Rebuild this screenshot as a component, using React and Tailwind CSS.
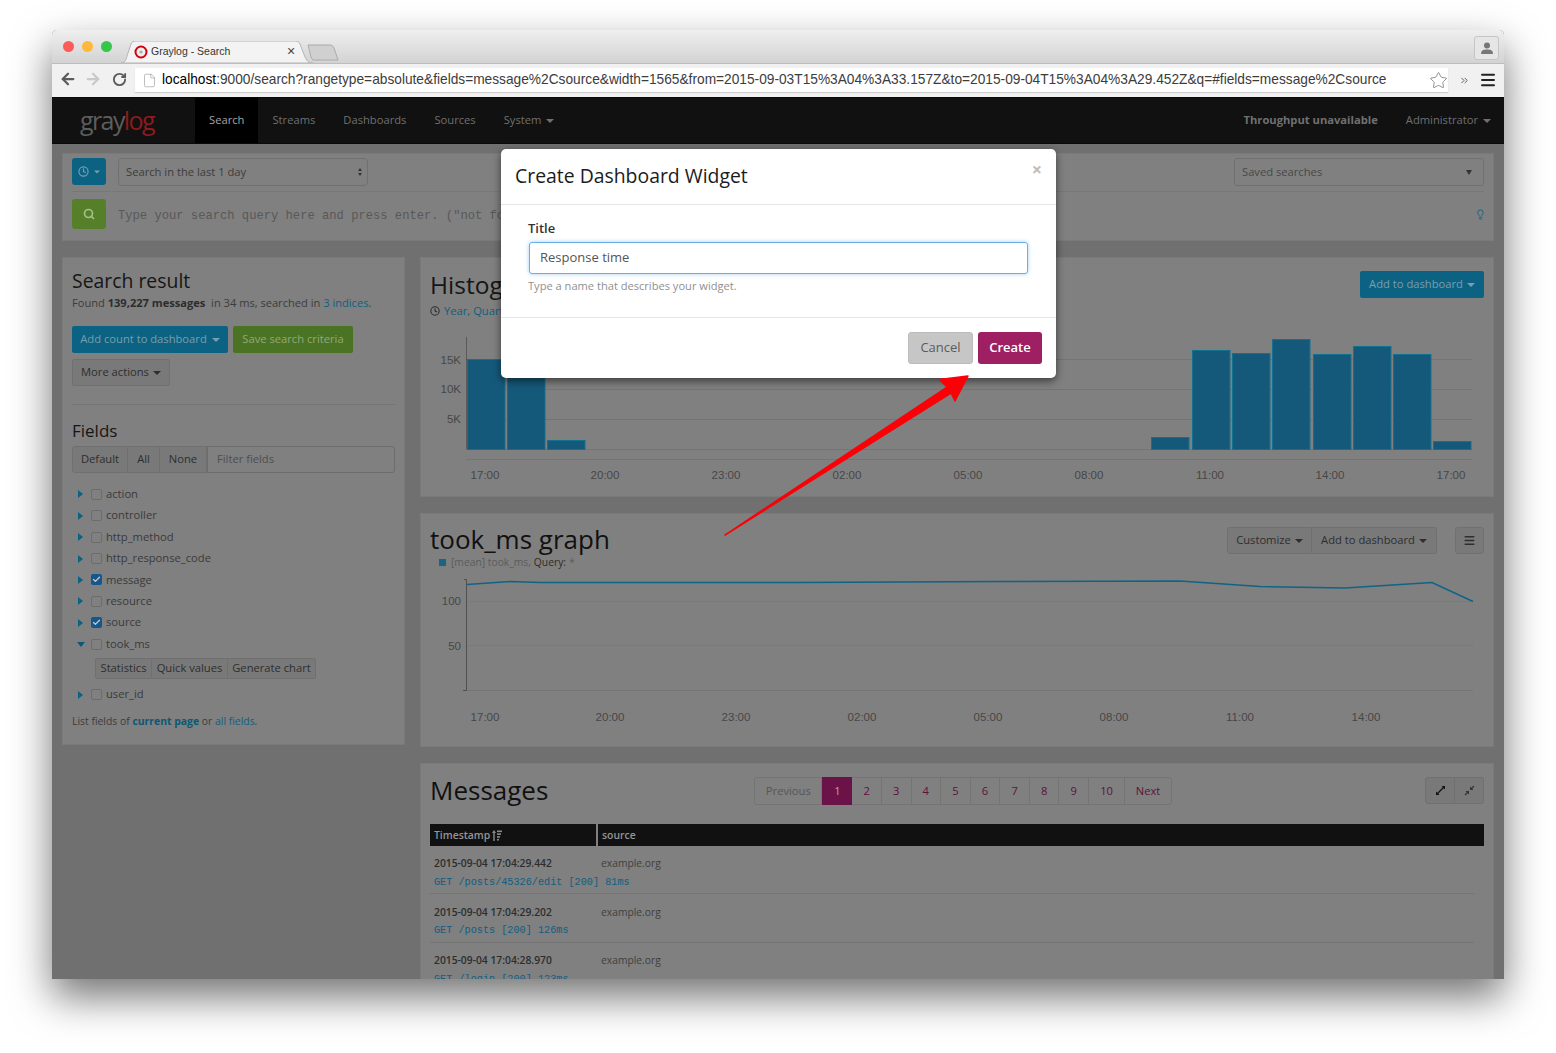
import React from 'react';
import { ArrowLeft, ArrowRight, RotateCw, File, Star, Clock, Search, Lightbulb, Check, Menu, ChevronsRight } from 'lucide-react';

const URL_TEXT = 'localhost:9000/search?rangetype=absolute&fields=message%2Csource&width=1565&from=2015-09-03T15%3A04%3A33.157Z&to=2015-09-04T15%3A04%3A29.452Z&q=#fields=message%2Csource';

const FIELDS = [
  { name: 'action' },
  { name: 'controller' },
  { name: 'http_method' },
  { name: 'http_response_code' },
  { name: 'message', checked: true },
  { name: 'resource' },
  { name: 'source', checked: true },
  { name: 'took_ms', open: true },
  { name: 'user_id' },
];

// page coordinates: x, top of bar (baseline is 449)
const BARS = [
  [467, 359], [507, 360], [547, 440], [1151, 437], [1192, 350], [1232, 353],
  [1272, 339], [1313, 354], [1353, 346], [1393, 354], [1433, 441],
];

const MESSAGES = [
  { time: '2015-09-04 17:04:29.442', text: 'GET /posts/45326/edit [200] 81ms' },
  { time: '2015-09-04 17:04:29.202', text: 'GET /posts [200] 126ms' },
  { time: '2015-09-04 17:04:28.970', text: 'GET /login [200] 123ms' },
];

const PAGES = ['2', '3', '4', '5', '6', '7', '8', '9', '10'];

function Caret({ className = '' }) {
  return <span className={`inline-block h-0 w-0 border-x-[4px] border-t-[4px] border-x-transparent border-t-current ${className}`} />;
}

function Btn({ children, className = '' }) {
  return (
    <div className={`flex items-center justify-center border border-[#707070] bg-[#797979] text-[11.2px] text-[#2e2e2e] ${className}`}>
      {children}
    </div>
  );
}

function BrowserChrome() {
  return (
    <div className="h-[67px] shrink-0 font-['Liberation_Sans',sans-serif]">
      {/* tab strip */}
      <div className="flex h-[33px] items-start bg-gradient-to-b from-[#efefef] to-[#d3d3d3] pl-[11px] pr-[5px]">
        <div className="mt-[11px] flex gap-[8px]">
          <span className="h-[11px] w-[11px] rounded-full bg-[#fc5c58]" />
          <span className="h-[11px] w-[11px] rounded-full bg-[#fdb93f]" />
          <span className="h-[11px] w-[11px] rounded-full bg-[#35c749]" />
        </div>
        <div className="relative ml-[9px] mt-[11px] flex h-[22px] w-[192px] items-center pl-[13px]">
          <svg className="absolute inset-0" width="192" height="22" viewBox="0 0 192 22">
            <path d="M0 22 C5 22 5 18 7 12 L10 3 C11 1 12 0 15 0 L174 0 C177 0 178 1 179 3 L184 16 C186 20 187 22 192 22 Z" fill="#f3f3f3" stroke="#b5b5b5" />
          </svg>
          <svg className="relative" width="14" height="14" viewBox="0 0 14 14">
            <circle cx="7" cy="7" r="5.5" fill="#eee" stroke="#d4000f" strokeWidth="2" />
            <circle cx="7" cy="7" r="1.6" fill="#aaa" />
          </svg>
          <span className="relative ml-[3px] text-[10.5px] text-[#333]">Graylog - Search</span>
          <span className="absolute left-[166px] top-[3px] text-[14px] leading-[14px] text-[#444]">×</span>
        </div>
        <svg className="mt-[14px] -ml-[6px]" width="32" height="17" viewBox="0 0 32 17">
          <path d="M1 1 L23 1 C25 1 26 2 27 4 L31 16 L7 16 C5 16 5 15 4 13 Z" fill="#d0d0d0" stroke="#aaa" />
        </svg>
        <div className="ml-auto mt-[6px] flex h-[24px] w-[25px] items-center justify-center rounded-[3px] border border-[#c5c5c5] bg-[#e6e6e6]">
          <svg width="12" height="13" viewBox="0 0 12 13">
            <circle cx="6" cy="3.6" r="3" fill="#777" />
            <path d="M0 12 C0 8 3 7.5 6 7.5 C9 7.5 12 8 12 12 Z" fill="#777" />
          </svg>
        </div>
      </div>
      {/* toolbar */}
      <div className="flex h-[34px] items-start border-t border-[#bdbdbd] bg-[#f1f1f1] pl-[7px] pr-[7px]">
        <ArrowLeft size={18} strokeWidth={3} className="mt-[6px] text-[#5c5c5c]" />
        <ArrowRight size={18} strokeWidth={3} className="ml-[7px] mt-[6px] text-[#c9c9c9]" />
        <RotateCw size={15} strokeWidth={3} className="ml-[10px] mt-[8px] text-[#5c5c5c]" />
        <div className="ml-[8px] mt-[4px] flex h-[24px] w-[1313px] items-center bg-white pl-[7px] shadow-[0_1px_1px_rgba(0,0,0,0.15)]">
          <File size={15} strokeWidth={1} className="text-[#999]" />
          <span className="ml-[5px] whitespace-nowrap text-[13.73px] text-[#3c3c3c]"><span className="text-black">localhost</span>{URL_TEXT.slice(9)}</span>
          <Star size={19} strokeWidth={1} className="absolute left-[1377px] text-[#777]" />
        </div>
        <ChevronsRight size={11} strokeWidth={2} className="ml-[11px] mt-[11px] text-[#555]" />
        <Menu size={18} strokeWidth={2.6} className="ml-[9px] mt-[7px] text-[#222]" />
      </div>
    </div>
  );
}

function NavBar() {
  return (
    <div className="flex h-[47px] shrink-0 items-stretch border-y border-[#0a0a0a] bg-[#111] text-[11.2px] text-[#707070]">
      <div className="ml-[28px] flex w-[115px] items-center text-[25px] font-medium leading-none tracking-[-1.6px]">
        <span className="text-[#5d5d5d]">gray</span><span className="text-[#8a1c1c]">log</span>
      </div>
      <div className="flex items-center bg-black px-[14px] text-[#a5a5a5]">Search</div>
      <div className="flex items-center px-[14px]">Streams</div>
      <div className="flex items-center px-[14px]">Dashboards</div>
      <div className="flex items-center px-[14px]">Sources</div>
      <div className="flex items-center gap-[5px] px-[14px]">System <Caret /></div>
      <div className="ml-auto flex items-center px-[14px] font-bold">Throughput unavailable</div>
      <div className="flex items-center gap-[5px] pl-[14px] pr-[13px]">Administrator <Caret /></div>
    </div>
  );
}

function SearchBar() {
  return (
    <div className="h-[88px] border border-[#7a7a7a] bg-[#808080] px-[9px] pt-[4px]">
      <div className="flex items-start pb-[5px]">
        <div className="flex h-[27px] w-[34px] items-center justify-center gap-[4px] rounded-[3px] bg-[#0c6282] text-[#7a9eac]">
          <Clock size={11} strokeWidth={2.5} /><Caret className="scale-75" />
        </div>
        <div className="ml-[12px] flex h-[28px] w-[250px] items-center justify-between rounded-[4px] border border-[#707070] pl-[7px] pr-[5px] text-[11.2px] text-[#3c3c3c]">
          Search in the last 1 day
          <span className="flex flex-col gap-[2px] text-[#333]">
            <span className="h-0 w-0 border-x-[2.5px] border-b-[3px] border-x-transparent border-b-current" />
            <span className="h-0 w-0 border-x-[2.5px] border-t-[3px] border-x-transparent border-t-current" />
          </span>
        </div>
        <div className="ml-auto flex h-[28px] w-[250px] items-center justify-between rounded-[3px] border border-[#707070] pl-[7px] pr-[11px] pt-[1px] text-[11.2px] text-[#484848]">
          Saved searches
          <span className="h-0 w-0 border-x-[3px] border-t-[5px] border-x-transparent border-t-[#333]" />
        </div>
      </div>
      <div className="flex items-center border-t border-[#787878] pt-[7px]">
        <div className="flex h-[30px] w-[34px] items-center justify-center rounded-[3px] bg-[#567f2a] text-[#a3bf88]">
          <Search size={12} strokeWidth={3.4} />
        </div>
        <span className="ml-[12px] pt-[4px] font-['Liberation_Mono',monospace] text-[12.15px] text-[#585858]">Type your search query here and press enter. ("not found")</span>
        <Lightbulb size={11} strokeWidth={2} className="ml-auto mr-[-2px] text-[#0c6282]" />
      </div>
    </div>
  );
}

function FieldRow({ field }) {
  return (
    <div className="flex h-[21.4px] items-center">
      <span className="flex w-[19px] justify-center">
        {field.open ? (
          <span className="h-0 w-0 -translate-x-[1px] border-x-[4px] border-t-[5px] border-x-transparent border-t-[#0c5876]" />
        ) : (
          <span className="h-0 w-0 -translate-x-[1px] border-y-[4px] border-l-[5px] border-y-transparent border-l-[#0c6282]" />
        )}
      </span>
      {field.checked ? (
        <span className="flex h-[11px] w-[11px] items-center justify-center rounded-[2px] bg-[#15568c] text-[#c9c9c9]">
          <Check size={9} strokeWidth={3.5} />
        </span>
      ) : (
        <span className="h-[11px] w-[11px] rounded-[2px] border border-[#6c6c6c]" />
      )}
      <span className="ml-[4px] text-[11.2px] text-[#3a3a3a]">{field.name}</span>
    </div>
  );
}

function Sidebar() {
  return (
    <div className="h-[488px] w-[343px] shrink-0 border border-[#7a7a7a] bg-[#808080] px-[9px] pt-[10px]">
      <h2 className="text-[19.4px] leading-[26px] text-[#161616]">Search result</h2>
      <p className="mt-[1px] text-[11.1px] leading-[16px] text-[#3c3c3c]">
        Found <b className="font-bold text-[#2d2d2d]">139,227 messages</b>&nbsp; in 34 ms, searched in <span className="text-[#0f5f80]">3 indices</span>.
      </p>
      <div className="mt-[15px] flex gap-[5px]">
        <div className="flex h-[27px] w-[156px] items-center justify-center gap-[5px] rounded-[2px] bg-[#0c6282] text-[11.2px] text-[#7a9eac]">Add count to dashboard <Caret /></div>
        <div className="flex h-[27px] w-[120px] items-center justify-center rounded-[2px] bg-[#4b7324] text-[11.2px] text-[#93a87a]">Save search criteria</div>
      </div>
      <Btn className="mt-[6px] h-[27px] w-[98px] gap-[4px] rounded-[2px]">More actions <Caret /></Btn>
      <div className="mt-[18px] border-t border-[#757575]" />
      <h3 className="mt-[15px] text-[17px] leading-[22px] text-[#161616]">Fields</h3>
      <div className="mt-[4px] flex h-[27px]">
        <Btn className="w-[56px] rounded-l-[3px]">Default</Btn>
        <Btn className="w-[32px] border-l-0">All</Btn>
        <Btn className="w-[47px] border-l-0">None</Btn>
        <div className="flex flex-1 items-center rounded-r-[3px] border border-[#6c6c6c] pl-[9px] text-[11.2px] text-[#4e4e4e]">Filter fields</div>
      </div>
      <div className="mt-[10.7px]">
        {FIELDS.map(field => (
          <div key={field.name}>
            <FieldRow field={field} />
            {field.open && (
              <div className="mb-[5px] ml-[23px] mt-[3px] flex h-[21px] w-[221px]">
                <Btn className="w-[57px] rounded-l-[2px]">Statistics</Btn>
                <Btn className="w-[76px] border-l-0">Quick values</Btn>
                <Btn className="flex-1 rounded-r-[2px] border-l-0">Generate chart</Btn>
              </div>
            )}
          </div>
        ))}
      </div>
      <p className="mt-[8px] text-[10.4px] leading-[16px] text-[#3c3c3c]">
        List fields of <b className="text-[#0c5876]">current page</b> or <span className="text-[#0f5f80]">all fields</span>.
      </p>
    </div>
  );
}

function HistogramPanel() {
  const labels = [[485, '17:00'], [605, '20:00'], [726, '23:00'], [847, '02:00'], [968, '05:00'], [1089, '08:00'], [1210, '11:00'], [1330, '14:00'], [1451, '17:00']];
  return (
    <div className="h-[240px] border border-[#7a7a7a] bg-[#808080] px-[9px] pt-[13px]">
      <div className="flex items-start justify-between">
        <div>
          <h2 className="text-[24.5px] leading-[28px] text-[#161616]">Histogram</h2>
          <p className="mt-[3px] flex items-center gap-[4px] text-[11.2px] leading-[18px] text-[#0f5f80]">
            <Clock size={10} strokeWidth={2.5} className="text-[#2b2b2b]" /> Year, Quarter, Month, Week, Day, Hour, Minute
          </p>
        </div>
        <div className="flex h-[27px] w-[124px] items-center justify-center gap-[4px] rounded-[2px] bg-[#0c6282] text-[11.2px] text-[#7a9eac]">Add to dashboard <Caret /></div>
      </div>
      <svg className="mt-[10px] block" width="1054" height="155" viewBox="430 330 1054 155" fontFamily="Liberation Sans, sans-serif" fontSize="11.5" fill="#474747">
        {[359, 389, 419, 449, 459].map(y => <line key={y} x1="466" x2="1472" y1={y + 0.5} y2={y + 0.5} stroke="#747474" />)}
        <line x1="466.5" x2="466.5" y1="337" y2="449" stroke="#5a5a5a" />
        {BARS.map(([x, top]) => <rect key={x} x={x + 0.5} y={top + 0.5} width="37.5" height={449 - top} fill="#15597a" stroke="#14708f" />)}
        <text x="461" y="364" textAnchor="end">15K</text>
        <text x="461" y="393" textAnchor="end">10K</text>
        <text x="461" y="423" textAnchor="end">5K</text>
        {labels.map(([x, t]) => <text key={x} x={x} y="479" textAnchor="middle">{t}</text>)}
      </svg>
    </div>
  );
}

function GraphPanel() {
  const labels = [[485, '17:00'], [610, '20:00'], [736, '23:00'], [862, '02:00'], [988, '05:00'], [1114, '08:00'], [1240, '11:00'], [1366, '14:00']];
  return (
    <div className="h-[234px] border border-[#7a7a7a] bg-[#808080] px-[9px] pt-[12px]">
      <div className="flex items-start justify-between">
        <div>
          <h2 className="text-[26px] leading-[26px] text-[#111]">took_ms graph</h2>
          <p className="mt-[2px] flex items-center pl-[9px] text-[10.3px] leading-[16px] text-[#5c5c5c]">
            <span className="mr-[5px] h-[7px] w-[7px] bg-[#1a6585]" />[mean] took_ms, <span className="ml-[3px] text-[#2b2b2b]">Query: </span><span className="ml-[3px]">*</span>
          </p>
        </div>
        <div className="mt-[1px] flex">
          <Btn className="h-[27px] w-[85px] gap-[4px] rounded-l-[3px]">Customize <Caret /></Btn>
          <Btn className="h-[27px] w-[125px] gap-[4px] rounded-r-[3px] border-l-0">Add to dashboard <Caret /></Btn>
          <Btn className="ml-[18px] h-[27px] w-[29px] rounded-[3px]"><Menu size={13} strokeWidth={2.5} /></Btn>
        </div>
      </div>
      <svg className="mt-[4px] block" width="1054" height="152" viewBox="430 574 1054 152" fontFamily="Liberation Sans, sans-serif" fontSize="11.5" fill="#474747">
        {[602, 646, 691].map(y => <line key={y} x1="466" x2="1473" y1={y - 0.5} y2={y - 0.5} stroke="#747474" strokeDasharray={y === 691 ? undefined : '1 1'} />)}
        <path d="M464 579.5 H466.5 V690.5 H463" fill="none" stroke="#505050" />
        <polyline points="467,584.5 510,581.5 540,582.5 800,582.5 1000,581.5 1180,581 1260,586.5 1345,588 1432,582.5 1473,601.5" fill="none" stroke="#0f6485" strokeWidth="1.5" />
        <text x="461" y="605" textAnchor="end">100</text>
        <text x="461" y="650" textAnchor="end">50</text>
        {labels.map(([x, t]) => <text key={x} x={x} y="721" textAnchor="middle">{t}</text>)}
      </svg>
    </div>
  );
}

function MessagesPanel() {
  return (
    <div className="border border-[#7a7a7a] bg-[#808080] px-[9px] pt-[13px] pb-[20px]">
      <div className="flex items-start">
        <h2 className="text-[26px] leading-[26px] text-[#111]">Messages</h2>
        <div className="ml-[206px] flex h-[28px] text-[11.2px] text-[#5e1238]">
          <div className="flex w-[68px] items-center justify-center rounded-l-[3px] border border-[#747474] text-[#565656]">Previous</div>
          <div className="flex w-[30px] items-center justify-center bg-[#6b1248] text-[#c2a0b4]">1</div>
          {PAGES.map(p => (
            <div key={p} className={`flex items-center justify-center border border-l-0 border-[#747474] ${p === '10' ? 'w-[36px]' : 'w-[29.6px]'}`}>{p}</div>
          ))}
          <div className="flex w-[47px] items-center justify-center rounded-r-[3px] border border-l-0 border-[#747474]">Next</div>
        </div>
        <div className="ml-auto flex">
          <Btn className="h-[27px] w-[30px] rounded-l-[3px]">
            <svg width="11" height="11" viewBox="0 0 11 11" fill="#111" stroke="#111"><path d="M2 9 L9 2" strokeWidth="1.2" /><path d="M6.5 1 H10 V4.5 Z M1 6.5 V10 H4.5 Z" strokeWidth="0" /></svg>
          </Btn>
          <Btn className="h-[27px] w-[29px] rounded-r-[3px] border-l-0">
            <svg width="11" height="11" viewBox="0 0 11 11" fill="#333" stroke="#333"><path d="M1 10 L4 7 M7 4 L10 1" strokeWidth="1.1" /><path d="M6 1.5 V5 H9.5 Z M1.5 6 H5 V9.5 Z" strokeWidth="0" /></svg>
          </Btn>
        </div>
      </div>
      <div className="mt-[19px] flex h-[22px] items-center gap-[2px] text-[10.4px] font-semibold text-[#959595]">
        <div className="flex h-full w-[166px] items-center gap-[2px] bg-[#111] pl-[4px] pt-[1px]">
          Timestamp
          <svg width="10" height="11" viewBox="0 0 10 11" fill="#8a8a8a"><path d="M2 0 L4 3 H2.7 V11 H1.3 V3 H0 Z" /><rect x="5" y="0.5" width="5" height="1.6" /><rect x="5" y="3.3" width="4" height="1.6" /><rect x="5" y="6.1" width="3" height="1.6" /><rect x="5" y="8.9" width="2" height="1.6" /></svg>
        </div>
        <div className="flex h-full flex-1 items-center bg-[#111] pl-[4px] pt-[1px]">source</div>
      </div>
      {MESSAGES.map(m => (
        <div key={m.time} className="mr-[10px] h-[48.3px] border-b border-[#747474] pl-[4px] pt-[9px]">
          <div className="flex h-[18px] items-center text-[10.3px]">
            <span className="w-[167px] font-semibold text-[#2d2d2d]">{m.time}</span>
            <span className="text-[#3f3f3f]">example.org</span>
          </div>
          <div className="mt-[1px] font-['Liberation_Mono',monospace] text-[10.2px] leading-[18px] text-[#0f5f80]">{m.text}</div>
        </div>
      ))}
    </div>
  );
}

function Modal() {
  return (
    <div className="absolute left-[449px] top-[119px] h-[229px] w-[555px] rounded-[5px] bg-white shadow-[0_3px_9px_rgba(0,0,0,0.55)]">
      <div className="relative flex h-[56px] items-center border-b border-[#e5e5e5] pb-[2px] pl-[14px] text-[19.4px] text-[#1c1c1c]">
        Create Dashboard Widget
        <span className="absolute right-[14px] top-[10px] text-[18px] font-bold leading-[20px] text-[#bdbdbd]">×</span>
      </div>
      <div className="h-[113px] border-b border-[#e5e5e5] px-[28px] pt-[14px]">
        <div className="-ml-[1px] text-[13px] font-semibold leading-[18px] text-[#333]">Title</div>
        <div className="mt-[5px] flex h-[32px] w-[499px] items-center rounded-[3px] border border-[#66afe9] pl-[10px] text-[13px] text-[#555] shadow-[0_0_4px_rgba(102,175,233,0.6)]">Response time</div>
        <div className="-ml-[1px] mt-[4px] text-[11.1px] leading-[16px] text-[#8f8f8f]">Type a name that describes your widget.</div>
      </div>
      <div className="flex justify-end gap-[5px] pr-[14px] pt-[14px]">
        <div className="flex h-[32px] w-[65px] items-center justify-center rounded-[3px] border border-[#bcbcbc] bg-[#c6c6c6] text-[13px] text-[#5c5c5c]">Cancel</div>
        <div className="flex h-[32px] w-[64px] items-center justify-center rounded-[3px] bg-[#9f1f63] text-[13px] font-semibold text-white">Create</div>
      </div>
    </div>
  );
}

function RedArrow() {
  return (
    <svg className="absolute left-[648px] top-[330px]" width="300" height="190" viewBox="700 360 300 190">
      <path d="M725 535 L947 387 L939.5 379.5 L968 376 L955 401 L951 393 Z" fill="#fb0007" stroke="#fb0007" strokeWidth="1.5" strokeLinejoin="round" />
    </svg>
  );
}

export default function App() {
  return (
    <div className="h-[1053px] overflow-hidden bg-white pl-[52px] pt-[30px] font-['Open_Sans',sans-serif]">
      <div className="relative flex h-[949px] w-[1452px] flex-col overflow-hidden rounded-t-[5px] bg-[#707070] shadow-[0_18px_40px_rgba(0,0,0,0.55)]">
        <BrowserChrome />
        <NavBar />
        <div className="flex flex-col gap-[16px] px-[10px] pt-[9px]">
          <SearchBar />
          <div className="flex gap-[15px]">
            <Sidebar />
            <div className="flex flex-1 flex-col gap-[16px]">
              <HistogramPanel />
              <GraphPanel />
              <MessagesPanel />
            </div>
          </div>
        </div>
        <Modal />
        <RedArrow />
      </div>
    </div>
  );
}
